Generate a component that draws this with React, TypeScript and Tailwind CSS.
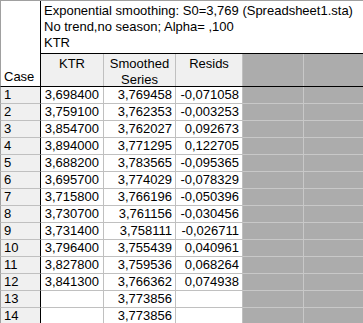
const rows: [string, string, string, string][] = [
  ["1", "3,698400", "3,769458", "-0,071058"],
  ["2", "3,759100", "3,762353", "-0,003253"],
  ["3", "3,854700", "3,762027", "0,092673"],
  ["4", "3,894000", "3,771295", "0,122705"],
  ["5", "3,688200", "3,783565", "-0,095365"],
  ["6", "3,695700", "3,774029", "-0,078329"],
  ["7", "3,715800", "3,766196", "-0,050396"],
  ["8", "3,730700", "3,761156", "-0,030456"],
  ["9", "3,731400", "3,758111", "-0,026711"],
  ["10", "3,796400", "3,755439", "0,040961"],
  ["11", "3,827800", "3,759536", "0,068264"],
  ["12", "3,841300", "3,766362", "0,074938"],
  ["13", "", "3,773856", ""],
  ["14", "", "3,773856", ""],
];

export default function App() {
  return (
    <div
      className="w-[363px] h-[323px] overflow-hidden bg-white text-[13px] leading-4 text-black"
      style={{ fontFamily: '"Liberation Sans", Arial, sans-serif' }}
    >
      {/* header block */}
      <div className="flex h-[87px] border-t border-[#a0a0a0]">
        <div className="w-[41px] shrink-0 border-l border-r border-b border-l-[#a0a0a0] border-r-black border-b-black bg-white flex items-end pl-[3px] pb-[1px]">
          Case
        </div>
        <div className="flex-1 flex flex-col">
          <div className="h-[53px] border-b border-black pl-[3px] pt-[2px] whitespace-nowrap">
            <div>Exponential smoothing: S0=3,769 (Spreadsheet1.sta)</div>
            <div>No trend,no season; Alpha= ,100</div>
            <div>KTR</div>
          </div>
          <div className="flex h-[33px] border-b border-black">
            <div className="w-[63px] border-r border-[#c0c0c0] bg-[#f0f0f0] text-center pt-[2px]">KTR</div>
            <div className="w-[72px] border-r border-[#c0c0c0] bg-[#f0f0f0] text-center pt-[2px]">
              Smoothed
              <br />
              Series
            </div>
            <div className="w-[67px] border-r border-[#c0c0c0] bg-[#f0f0f0] text-center pt-[2px]">Resids</div>
            <div className="w-[61px] border-r border-[#c8c8c8] bg-[#acacac]" />
            <div className="flex-1 bg-[#acacac]" />
          </div>
        </div>
      </div>

      {/* data rows */}
      {rows.map((r) => (
        <div key={r[0]} className="flex h-[17px]">
          <div className="w-[41px] shrink-0 border-l border-r border-b border-l-[#a0a0a0] border-r-black border-b-[#c0c0c0] bg-[#f0f0f0] pl-[3px]">
            {r[0]}
          </div>
          <div className="w-[63px] border-r border-b border-[#c0c0c0] text-right pr-[4px]">{r[1]}</div>
          <div className="w-[72px] border-r border-b border-[#c0c0c0] text-right pr-[3px]">{r[2]}</div>
          <div className="w-[67px] border-r border-b border-[#c0c0c0] text-right pr-[3px]">{r[3]}</div>
          <div className="w-[61px] border-r border-b border-[#c8c8c8] bg-[#acacac]" />
          <div className="flex-1 border-b border-[#c8c8c8] bg-[#acacac]" />
        </div>
      ))}
    </div>
  );
}
